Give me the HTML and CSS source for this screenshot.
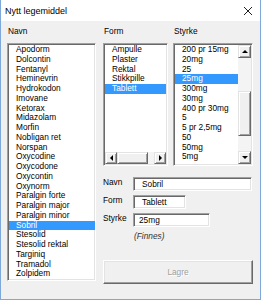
FILE: index.html
```html
<!DOCTYPE html>
<html lang="no">
<head>
    <meta charset="UTF-8">
    <title>Nytt legemiddel</title>
    <link rel="stylesheet" href="styles.css">
</head>
<body>
    <div class="window">
        <div class="titlebar">
            <span class="title">Nytt legemiddel</span>
            <svg class="close" width="8" height="8" viewBox="0 0 8 8">
                <path d="M0 0 L8 8 M8 0 L0 8" stroke="#222" stroke-width="1"/>
            </svg>
        </div>

        <div class="main">
            <div class="col-navn">
                <div class="label">Navn</div>
                <div class="list list-navn">
                    <div class="item">Apodorm</div>
                    <div class="item">Dolcontin</div>
                    <div class="item">Fentanyl</div>
                    <div class="item">Heminevrin</div>
                    <div class="item">Hydrokodon</div>
                    <div class="item">Imovane</div>
                    <div class="item">Ketorax</div>
                    <div class="item">Midazolam</div>
                    <div class="item">Morfin</div>
                    <div class="item">Nobligan ret</div>
                    <div class="item">Norspan</div>
                    <div class="item">Oxycodine</div>
                    <div class="item">Oxycodone</div>
                    <div class="item">Oxycontin</div>
                    <div class="item">Oxynorm</div>
                    <div class="item">Paralgin forte</div>
                    <div class="item">Paralgin major</div>
                    <div class="item">Paralgin minor</div>
                    <div class="item selected">Sobril</div>
                    <div class="item">Stesolid</div>
                    <div class="item">Stesolid rektal</div>
                    <div class="item">Targiniq</div>
                    <div class="item">Tramadol</div>
                    <div class="item">Zolpidem</div>
                </div>
            </div>

            <div class="col-right">
                <div class="pickers">
                    <div class="col-form">
                        <div class="label">Form</div>
                        <div class="list list-form">
                            <div class="items">
                                <div class="item">Ampulle</div>
                                <div class="item">Plaster</div>
                                <div class="item">Rektal</div>
                                <div class="item">Stikkpille</div>
                                <div class="item selected">Tablett</div>
                            </div>
                            <div class="hscroll">
                                <div class="sbtn"><span class="arrow-left"></span></div>
                                <div class="hthumb"></div>
                                <div class="htrack"></div>
                                <div class="sbtn"><span class="arrow-right"></span></div>
                            </div>
                        </div>
                    </div>

                    <div class="col-styrke">
                        <div class="label">Styrke</div>
                        <div class="list list-styrke">
                            <div class="items">
                                <div class="item">200 pr 15mg</div>
                                <div class="item">20mg</div>
                                <div class="item">25</div>
                                <div class="item selected">25mg</div>
                                <div class="item">300mg</div>
                                <div class="item">30mg</div>
                                <div class="item">400 pr 30mg</div>
                                <div class="item">5</div>
                                <div class="item">5 pr 2,5mg</div>
                                <div class="item">50</div>
                                <div class="item">50mg</div>
                                <div class="item">5mg</div>
                            </div>
                            <div class="vscroll">
                                <div class="sbtn"><span class="arrow-up"></span></div>
                                <div class="vtrack"><div class="vthumb"></div></div>
                                <div class="sbtn"><span class="arrow-down"></span></div>
                            </div>
                        </div>
                    </div>
                </div>

                <div class="fields">
                    <div class="field">
                        <span class="field-label">Navn</span>
                        <div class="textbox textbox-navn">Sobril</div>
                    </div>
                    <div class="field">
                        <span class="field-label">Form</span>
                        <div class="textbox textbox-form">Tablett</div>
                    </div>
                    <div class="field">
                        <span class="field-label">Styrke</span>
                        <div class="textbox textbox-styrke">25mg</div>
                    </div>
                </div>

                <div class="status">(Finnes)</div>

                <div class="button disabled">Lagre</div>
            </div>
        </div>
    </div>
</body>
</html>
```

FILE: styles.css
```css
body {
    margin: 0;
    width: 261px;
    height: 300px;
    overflow: hidden;
    background-color: #ffffff;
    font-family: "Liberation Sans", Arial, sans-serif;
    font-size: 8.3px;
    color: #000000;
}

.window {
    box-sizing: border-box;
    width: 261px;
    height: 300px;
    border: 1px solid #7fa8da;
    border-top: none;
    background-color: #f0f0f0;
    display: flex;
    flex-direction: column;
}

.titlebar {
    height: 21px;
    flex: none;
    background-color: #ffffff;
    display: flex;
    align-items: center;
    justify-content: space-between;
    padding: 0 8px 0 4px;
}

.title {
    font-size: 9px;
}

.close {
    display: block;
    margin-top: 1px;
}

.main {
    display: flex;
    gap: 7px;
    padding: 5px 7px 0 6px;
}

.label {
    line-height: 11px;
    height: 11px;
    margin-bottom: 6px;
    padding-left: 1px;
}

/* sunken listbox */
.list {
    box-sizing: border-box;
    background-color: #ffffff;
    border: 1px solid;
    border-color: #a0a0a0 #ffffff #ffffff #a0a0a0;
    box-shadow: inset 1px 1px 0 #696969, inset -1px -1px 0 #e3e3e3;
    padding-top: 1px;
    overflow: hidden;
}

.item {
    line-height: 9.75px;
    height: 9.75px;
    padding-left: 7px;
    white-space: nowrap;
}

.item.selected {
    background-color: #3399ff;
    color: #ffffff;
}

.col-navn {
    width: 89px;
}

.list-navn {
    height: 238px;
    padding-left: 1px;
}

.col-right {
    width: 150px;
    display: flex;
    flex-direction: column;
}

.pickers {
    display: flex;
    gap: 5px;
}

.col-form {
    width: 65px;
}

.col-styrke {
    width: 80px;
}

.list-form,
.list-styrke {
    height: 123px;
    display: flex;
    padding: 1px 1px 1px 1px;
}

.list-form {
    flex-direction: column;
}

.list-form .items {
    flex: 1;
}

.list-styrke .items {
    flex: 1;
}

/* scrollbars */
.hscroll {
    height: 12px;
    display: flex;
}

.vscroll {
    width: 13px;
    display: flex;
    flex-direction: column;
}

.sbtn {
    box-sizing: border-box;
    width: 12px;
    height: 12px;
    flex: none;
    background-color: #f0f0f0;
    border: 1px solid;
    border-color: #e3e3e3 #696969 #696969 #e3e3e3;
    box-shadow: inset 1px 1px 0 #ffffff, inset -1px -1px 0 #a0a0a0;
    display: flex;
    align-items: center;
    justify-content: center;
}

.vscroll .sbtn {
    width: 13px;
    height: 13px;
}

.hthumb {
    box-sizing: border-box;
    width: 31px;
    background-color: #f0f0f0;
    border: 1px solid;
    border-color: #e3e3e3 #696969 #696969 #e3e3e3;
    box-shadow: inset 1px 1px 0 #ffffff, inset -1px -1px 0 #a0a0a0;
}

.htrack,
.vtrack {
    flex: 1;
    background-color: #f4f4f4;
}

.vthumb {
    box-sizing: border-box;
    height: 45px;
    margin-top: 33px;
    background-color: #f0f0f0;
    border: 1px solid;
    border-color: #e3e3e3 #696969 #696969 #e3e3e3;
    box-shadow: inset 1px 1px 0 #ffffff, inset -1px -1px 0 #a0a0a0;
}

.arrow-up,
.arrow-down,
.arrow-left,
.arrow-right {
    width: 0;
    height: 0;
    border: 3px solid transparent;
}

.arrow-up {
    border-bottom-color: #000000;
    border-top-width: 0;
}

.arrow-down {
    border-top-color: #000000;
    border-bottom-width: 0;
}

.arrow-left {
    border-right-color: #000000;
    border-left-width: 0;
}

.arrow-right {
    border-left-color: #000000;
    border-right-width: 0;
}

/* fields */
.fields {
    margin-top: 11px;
    display: flex;
    flex-direction: column;
    gap: 4px;
}

.field {
    display: flex;
    align-items: flex-start;
}

.field-label {
    width: 30px;
    line-height: 10px;
    flex: none;
}

.textbox {
    box-sizing: border-box;
    height: 14px;
    line-height: 12px;
    background-color: #ffffff;
    border: 1px solid;
    border-color: #a0a0a0 #ffffff #ffffff #a0a0a0;
    box-shadow: inset 1px 1px 0 #696969, inset -1px -1px 0 #e3e3e3;
    padding-left: 8px;
}

.textbox-navn {
    width: 119px;
}

.textbox-form {
    width: 53px;
}

.textbox-styrke {
    width: 77px;
    padding-left: 5px;
}

.status {
    margin-top: 4px;
    padding-left: 31px;
    line-height: 11px;
    font-style: italic;
    color: #333333;
}

.button {
    box-sizing: border-box;
    margin-top: 18px;
    height: 24px;
    background-color: #f0f0f0;
    border: 1px solid;
    border-color: #ffffff #696969 #696969 #ffffff;
    box-shadow: inset -1px -1px 0 #a0a0a0, inset 1px 1px 0 #e3e3e3;
    display: flex;
    align-items: center;
    justify-content: center;
}

.button.disabled {
    color: #a0a0a0;
    text-shadow: 1px 1px 0 #ffffff;
}
```
